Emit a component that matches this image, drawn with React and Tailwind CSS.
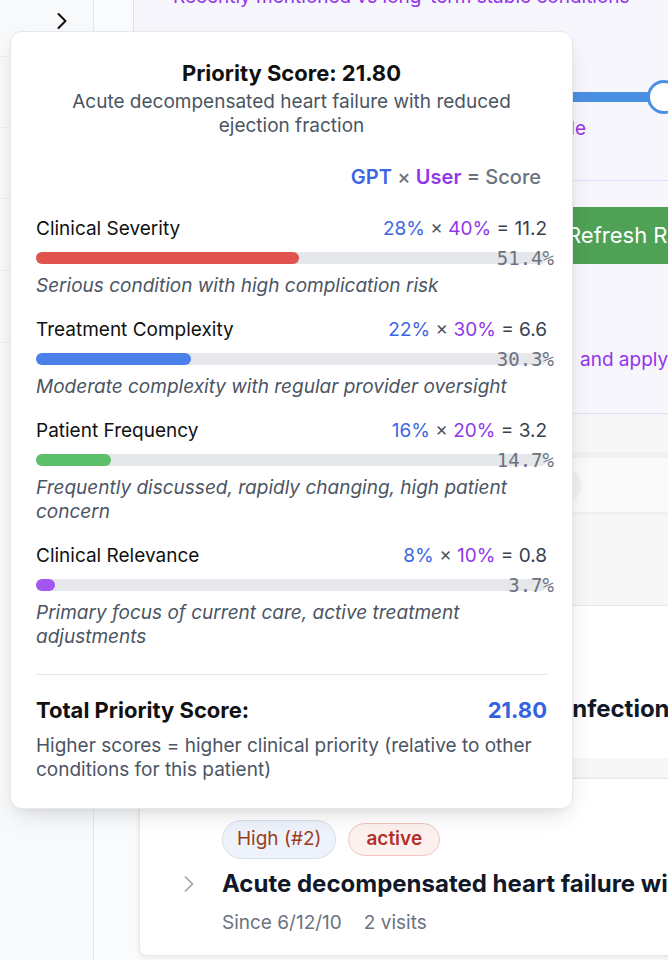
import React from 'react';
import { ChevronRight } from 'lucide-react';

const rows = [
  { label: 'Clinical Severity', gpt: '28%', user: '40%', score: '11.2', pct: 51.4, color: 'bg-[#e0534f]', desc: 'Serious condition with high complication risk' },
  { label: 'Treatment Complexity', gpt: '22%', user: '30%', score: '6.6', pct: 30.3, color: 'bg-[#4b80ea]', desc: 'Moderate complexity with regular provider oversight' },
  { label: 'Patient Frequency', gpt: '16%', user: '20%', score: '3.2', pct: 14.7, color: 'bg-[#5cbf6a]', desc: 'Frequently discussed, rapidly changing, high patient concern' },
  { label: 'Clinical Relevance', gpt: '8%', user: '10%', score: '0.8', pct: 3.7, color: 'bg-[#a357f0]', desc: 'Primary focus of current care, active treatment adjustments' },
];

function Row({ r }) {
  return (
    <div>
      <div className="flex justify-between text-[19px] leading-[24px]">
        <span className="text-[#111111]">{r.label}</span>
        <span>
          <span className="text-[#3d66e4]">{r.gpt}</span>
          <span className="text-[#4b5563]"> × </span>
          <span className="text-[#9038e8]">{r.user}</span>
          <span className="text-[#374151]"> = {r.score}</span>
        </span>
      </div>
      <div className="relative mt-[11px] h-[12px] rounded-full bg-[#e5e7eb]">
        <div className={`h-full rounded-full ${r.color}`} style={{ width: r.pct + '%' }} />
        <span className="absolute right-[-7px] top-1/2 -translate-y-1/2 font-['DejaVu_Sans_Mono',monospace] text-[19px] leading-none text-[#6b7280]">
          {r.pct}%
        </span>
      </div>
      <div className="mt-[10px] text-[19px] leading-[24px] italic text-[#4b5563]">{r.desc}</div>
    </div>
  );
}

export default function App() {
  return (
    <div className="relative flex h-[960px] w-[668px] overflow-hidden bg-[#fafbfc] font-['Inter',sans-serif]">
      {/* sidebar */}
      <aside className="flex w-[94px] shrink-0 flex-col border-r border-[#e5e7eb] bg-[#f8f9fb]">
        <div className="flex h-[57px] items-start border-b border-[#eceef1] pl-[48px] pt-[7px]">
          <ChevronRight size={28} strokeWidth={1.8} className="text-[#111111]" />
        </div>
        <div className="h-[71px] border-b border-[#eceef1]" />
        <div className="h-[71px] border-b border-[#eceef1]" />
        <div className="h-[72px] border-b border-[#eceef1]" />
        <div className="h-[72px] border-b border-[#eceef1]" />
      </aside>

      {/* main */}
      <main className="flex w-[574px] shrink-0 flex-col">
        <section className="ml-[39px] flex h-[414px] w-[700px] shrink-0 flex-col overflow-hidden border-b border-l border-[#e4dbf7] bg-[#f8f6fd]">
          <div className="-mt-[15px] whitespace-nowrap pl-[39px] text-[19px] leading-[24px] text-[#9333ea]">
            Recently mentioned vs long-term stable conditions
          </div>
          <div className="mt-[71px] flex h-[34px] items-center">
            <div className="ml-[33px] h-[10px] w-[484px] rounded-l-full bg-[#4a90e2]" />
            <div className="-ml-[4px] h-[34px] w-[34px] rounded-full border-[3px] border-[#4a90e2] bg-white" />
          </div>
          <div className="mt-[3px] w-[452px] text-right text-[19px] leading-[24px] text-[#9333ea]">Long-term stable</div>
          <div className="mt-[39px] border-b border-[#e5d9fb]" />
          <div className="ml-[300px] mt-[26px] flex h-[57px] w-[400px] items-center bg-[#4fa156] pl-[133px] text-[22px] text-white">
            Refresh Rankings
          </div>
          <div className="mt-[84px] whitespace-nowrap pl-[446px] text-[19px] leading-[24px] text-[#9333ea]">
            and apply changes
          </div>
        </section>

        <div className="h-[38px] shrink-0 bg-[#f7f7f8]" />
        <div className="flex h-[63px] shrink-0 items-center border-b-[3px] border-t-[6px] border-[#f0f0f2] bg-[#fafafa] pl-[300px]">
          <div className="h-[33px] w-[188px] rounded-full bg-[#f1f1f3]" />
        </div>
        <div className="h-[90px] shrink-0 bg-[#f7f7f8]" />

        <div className="ml-[45px] flex h-[153px] w-[560px] shrink-0 flex-col justify-end border-t border-[#e5e7eb] bg-white pb-[33px] pl-[83px] shadow-[0_2px_4px_rgba(0,0,0,0.06)]">
          <div className="whitespace-nowrap text-[24px] font-bold leading-[32px] text-[#111827]">Recurrent lower urinary tract infection</div>
        </div>
        <div className="h-[20px] shrink-0 bg-[#f7f7f8]" />

        <div className="ml-[45px] w-[560px] shrink-0 rounded-b-[8px] border border-[#e5e7eb] bg-white pb-[20px] pl-[82px] pt-[41px] shadow-[0_2px_6px_rgba(0,0,0,0.08)]">
          <div className="flex items-center gap-[12px]">
            <span className="flex h-[39px] items-center rounded-full border border-[#d6dfee] bg-[#eef3fb] px-[14px] text-[19px] text-[#9a3d22]">High (#2)</span>
            <span className="flex h-[33px] items-center rounded-full border border-[#f4c3bf] bg-[#fdf1f0] px-[17px] text-[19px] font-semibold text-[#b0302a]">active</span>
          </div>
          <div className="-ml-[47px] mt-[9px] flex items-center">
            <div className="w-[47px] shrink-0">
              <ChevronRight size={28} strokeWidth={1.5} className="text-[#9ca3af]" />
            </div>
            <span className="whitespace-nowrap text-[24px] font-bold leading-[32px] text-[#111827]">
              Acute decompensated heart failure with reduced ejection fraction
            </span>
          </div>
          <div className="mt-[11px] flex gap-[22px] text-[19px] leading-[24px] text-[#6b7280]">
            <span>Since 6/12/10</span>
            <span>2 visits</span>
          </div>
        </div>
      </main>

      {/* popover */}
      <div className="absolute left-[10px] top-[31px] w-[563px] rounded-[12px] border border-[#e5e7eb] bg-white px-[25px] pb-[26px] pt-[27px] shadow-[0_10px_25px_-5px_rgba(0,0,0,0.12),0_4px_10px_-4px_rgba(0,0,0,0.08)]">
        <div className="text-center">
          <div className="text-[22px] font-bold leading-[28px] text-[#111111]">Priority Score: 21.80</div>
          <div className="mt-[3px] text-[19px] leading-[24px] text-[#4b5563]">
            Acute decompensated heart failure with reduced ejection fraction
          </div>
        </div>
        <div className="mt-[27px] pr-[6px] text-right text-[20px] font-medium leading-[24px]">
          <span className="font-semibold text-[#3d66e4]">GPT</span>
          <span className="text-[#6b7280]"> × </span>
          <span className="font-semibold text-[#9038e8]">User</span>
          <span className="text-[#6b7280]"> = Score</span>
        </div>
        <div className="mt-[28px] flex flex-col gap-[20px]">
          {rows.map((r) => (
            <Row key={r.label} r={r} />
          ))}
        </div>
        <div className="mt-[25px] border-t border-[#e5e7eb] pt-[21px]">
          <div className="flex items-center justify-between text-[22px] font-bold leading-[28px]">
            <span className="text-[#111111]">Total Priority Score:</span>
            <span className="text-[#3563e0]">21.80</span>
          </div>
          <div className="mt-[10px] text-[19px] leading-[24px] text-[#4b5563]">
            Higher scores = higher clinical priority (relative to other conditions for this patient)
          </div>
        </div>
      </div>
    </div>
  );
}
